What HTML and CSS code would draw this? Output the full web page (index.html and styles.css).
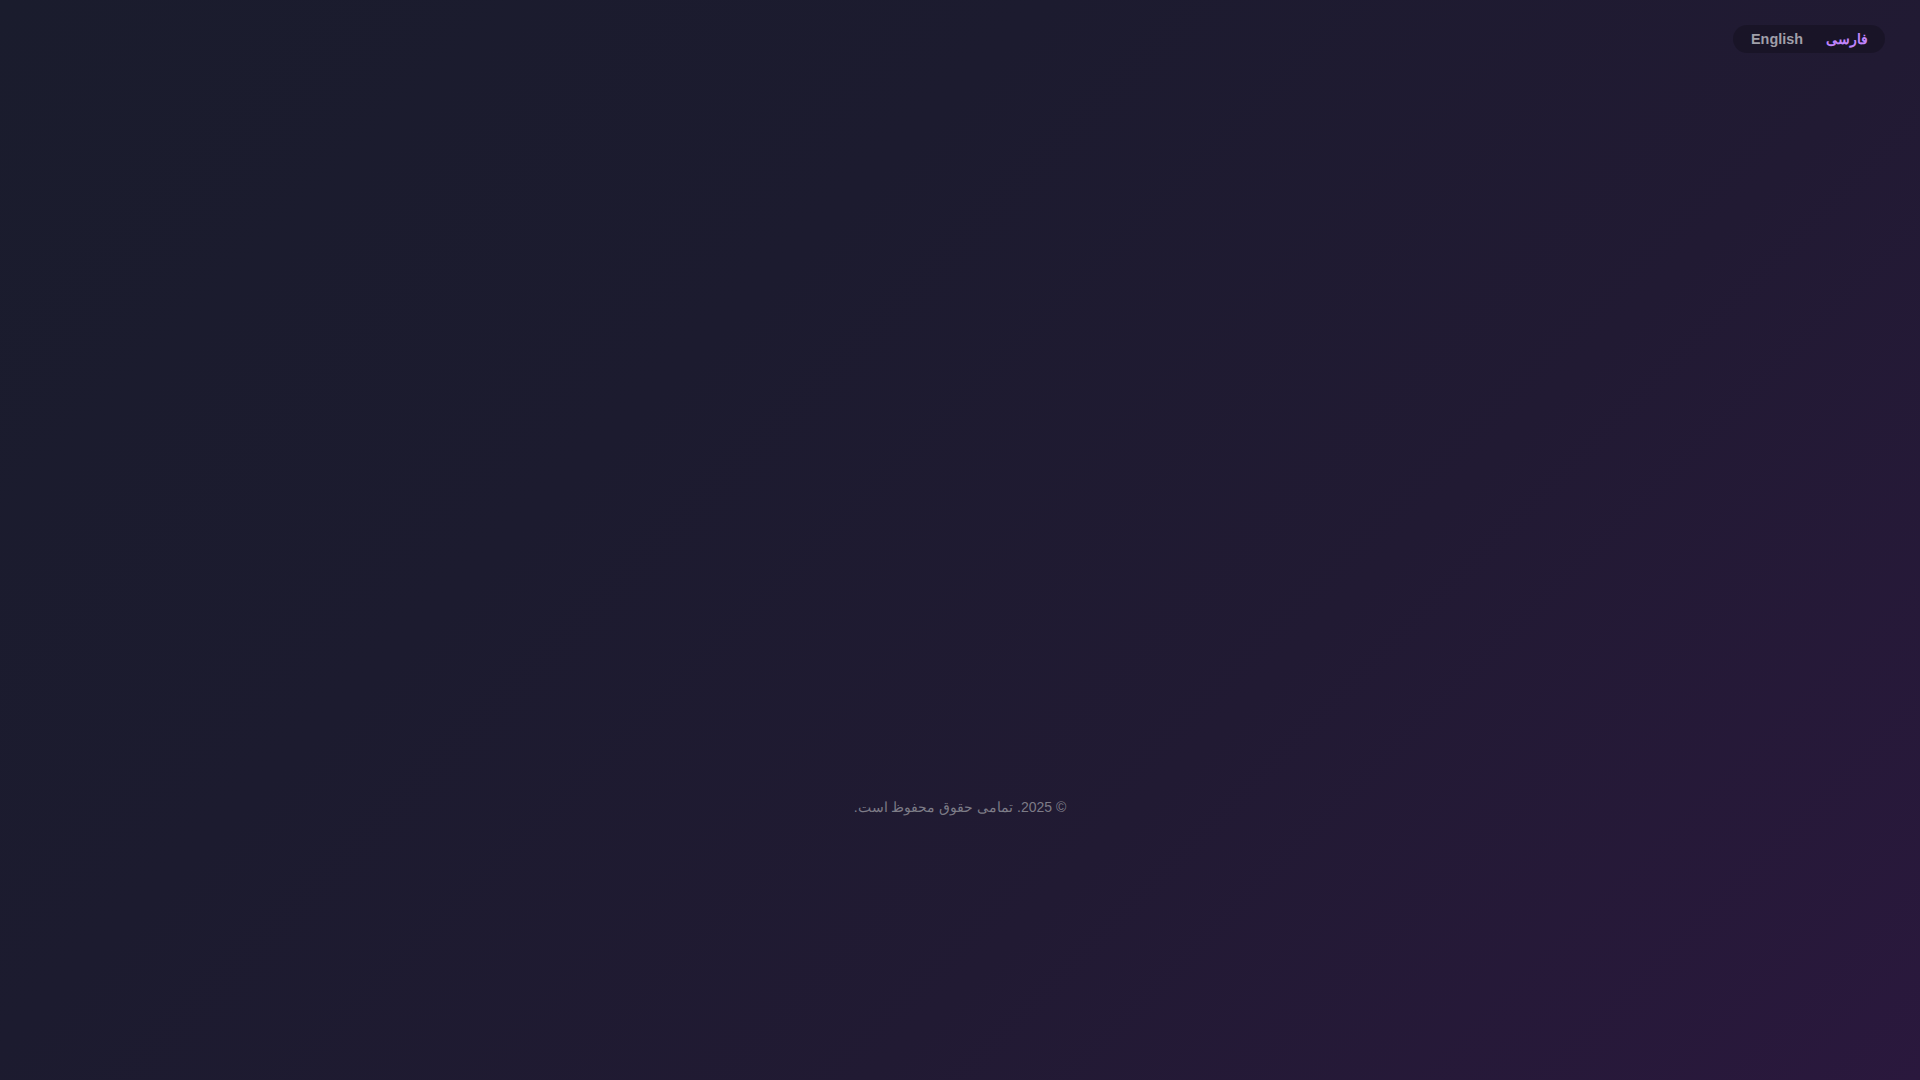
FILE: index.html
```html
<!DOCTYPE html>
<html lang="fa" dir="rtl">
<head>
    <meta charset="UTF-8">
    <meta name="viewport" content="width=device-width, initial-scale=1.0">
    <title>ورود</title>
    <link rel="stylesheet" href="styles.css">
</head>
<body>

    <!-- language switcher -->
    <div class="lang-switch" dir="ltr">
        <button class="lang-btn">English</button>
        <button class="lang-btn active">فارسی</button>
    </div>

    <main class="page">
        <div class="card"></div>
        <footer class="footer">© 2025. تمامی حقوق محفوظ است.</footer>
    </main>

</body>
</html>
```

FILE: styles.css
```css
* {
    box-sizing: border-box;
}

html, body {
    margin: 0;
    padding: 0;
}

body {
    min-height: 100vh;
    font-family: "Liberation Sans", sans-serif;
    background: linear-gradient(135deg, #1a1c2d 0%, #1c1b2f 35%, #211a33 65%, #2a183d 100%);
    color: #e5e5ea;
}

.lang-switch {
    position: absolute;
    top: 25px;
    right: 35px;
    display: flex;
    align-items: center;
    padding: 4px 6px;
    border-radius: 999px;
    background-color: rgba(0, 0, 0, 0.22);
}

.lang-btn {
    border: none;
    background: none;
    padding: 0 11px 0 12px;
    font-family: "Liberation Sans", sans-serif;
    font-size: 0.9rem;
    font-weight: bold;
    line-height: 20px;
    color: #a09fa9;
    cursor: pointer;
}

.lang-btn.active {
    color: #c084fc;
}

.page {
    min-height: 100vh;
    display: flex;
    flex-direction: column;
    align-items: center;
    justify-content: center;
    padding-top: 33px;
}

.card {
    width: 620px;
    height: 458px;
    border-radius: 16px;
    background: rgba(255, 255, 255, 0.004);
}

.footer {
    margin-top: 43px;
    font-size: 14px;
    line-height: 20px;
    color: #7d7c87;
    text-align: center;
}
```
